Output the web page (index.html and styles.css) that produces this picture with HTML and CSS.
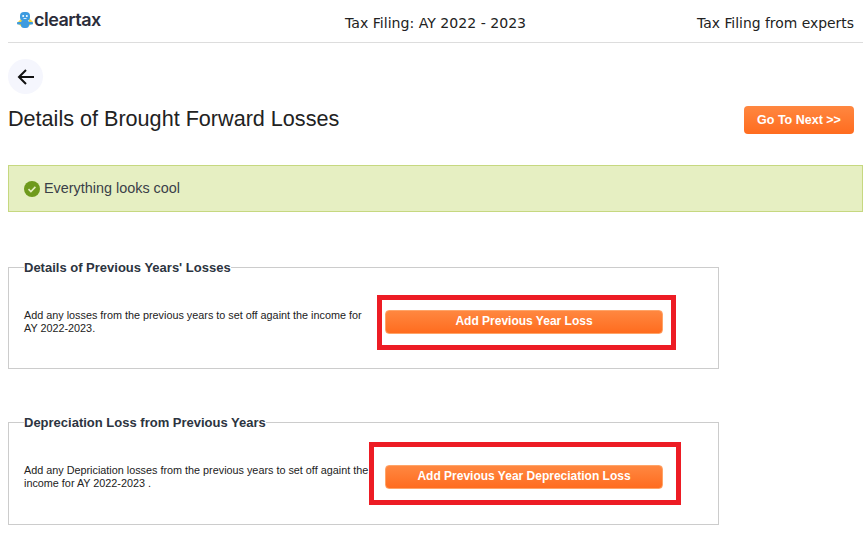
FILE: index.html
```html
<!DOCTYPE html>
<html>
  <head>
    <title>Details of Brought Forward Losses</title>
    <link rel="stylesheet" href="styles.css">
  </head>
  <body>
    <div class="header">
      <div class="logo">
        <svg width="16" height="16" viewBox="0 0 16 16">
          <path d="M0 11l5-5v9z" fill="#f5d63d"></path>
          <path d="M16 10l-4-4v8z" fill="#f5d63d"></path>
          <rect x="3" y="0" width="10" height="9" rx="4" fill="#3d9be0"></rect>
          <rect x="4" y="8" width="8" height="8" rx="3" fill="#3d9be0"></rect>
          <rect x="0" y="10" width="16" height="2.5" rx="1" fill="#3d9be0"></rect>
          <circle cx="6.2" cy="4" r="1" fill="#fff"></circle>
          <circle cx="9.8" cy="4" r="1" fill="#fff"></circle>
          <path d="M6.5 6.5h3" stroke="#fff" stroke-width="0.8"></path>
        </svg>
        <span>cleartax</span>
      </div>
      <span class="nav-title">Tax Filing: AY 2022 - 2023</span>
      <span class="nav-link">Tax Filing from experts</span>
    </div>

    <div class="back">
      <svg width="18" height="18" viewBox="0 0 18 18" fill="none" stroke="#111" stroke-width="2">
        <path d="M17 9H2"></path>
        <path d="M9 2L2 9l7 7"></path>
      </svg>
    </div>

    <div class="title-row">
      <h1>Details of Brought Forward Losses</h1>
      <button class="btn btn-next">Go To Next &gt;&gt;</button>
    </div>

    <div class="alert">
      <svg width="16" height="16" viewBox="0 0 16 16">
        <circle cx="8" cy="8" r="8" fill="#6f9a1c"></circle>
        <path d="M4.5 8.2l2.4 2.3 4.5-4.6" fill="none" stroke="#e6efc2" stroke-width="1.6"></path>
      </svg>
      <span>Everything looks cool</span>
    </div>

    <fieldset class="box box-first">
      <legend>Details of Previous Years' Losses</legend>
      <div class="box-row">
        <p>Add any losses from the previous years to set off againt the income for<br>AY 2022-2023.</p>
        <div class="action">
          <button class="btn btn-wide">Add Previous Year Loss</button>
          <div class="mark mark-first"></div>
        </div>
      </div>
    </fieldset>

    <fieldset class="box box-second">
      <legend>Depreciation Loss from Previous Years</legend>
      <div class="box-row">
        <p>Add any Depriciation losses from the previous years to set off againt the<br>income for AY 2022-2023 .</p>
        <div class="action">
          <button class="btn btn-wide">Add Previous Year Depreciation Loss</button>
          <div class="mark mark-second"></div>
        </div>
      </div>
    </fieldset>
  </body>
</html>
```

FILE: styles.css
```css
body {
  font-family: "Liberation Sans", Arial, sans-serif;
  margin: 0 0 0 8px;
  color: #222;
  overflow: hidden;
}

.header {
  display: grid;
  grid-template-columns: 337px 1fr auto;
  align-items: center;
  height: 42px;
  border-bottom: 1px solid #ddd;
  padding-right: 9px;
  font-family: "DejaVu Sans", Verdana, sans-serif;
  font-size: 14.1px;
  color: #222;
}

.nav-title,
.nav-link {
  margin-top: 4px;
}

.nav-link {
  font-size: 13.9px;
}

.logo {
  display: flex;
  align-items: center;
  gap: 1px;
  padding-left: 9px;
  margin-top: -3px;
  font-family: Inter, sans-serif;
  font-weight: 600;
  font-size: 18px;
  letter-spacing: -0.5px;
  color: #2b2d3a;
}

.back {
  display: flex;
  align-items: center;
  justify-content: center;
  width: 35px;
  height: 35px;
  margin-top: 16px;
  border-radius: 50%;
  background-color: #f5f6fd;
}

.title-row {
  display: flex;
  justify-content: space-between;
  align-items: flex-start;
  margin-top: 11px;
  padding-right: 9px;
}

h1 {
  margin: 0;
  font-size: 21.6px;
  font-weight: 400;
  line-height: 28px;
}

.btn {
  border: 1px solid #ffa468;
  border-radius: 4px;
  background: linear-gradient(#ff8740, #ff6c1f);
  color: white;
  font-family: "Liberation Sans", Arial, sans-serif;
  font-weight: 700;
  font-size: 12px;
  padding: 0 0 2px;
}

.btn-next {
  width: 110px;
  height: 28px;
  margin-top: 1px;
  padding: 0;
  font-size: 12.5px;
  border: none;
}

.alert {
  display: flex;
  align-items: center;
  gap: 4px;
  height: 45px;
  margin-top: 31px;
  padding-left: 15px;
  background-color: #e6efc2;
  border: 1px solid #c6d880;
  font-size: 14.4px;
  color: #3a4048;
}

.alert span {
  margin-bottom: 1px;
}

.box {
  width: 711px;
  margin: 0;
  padding: 0 15px;
  box-sizing: border-box;
  border: 1px solid #ccc;
}

.box-first {
  height: 109px;
  margin-top: 48px;
}

.box-second {
  height: 110px;
  margin-top: 46px;
}

legend {
  padding: 0;
  font-size: 13px;
  font-weight: 700;
  color: #2c3440;
  line-height: 15px;
}

.box-row {
  display: flex;
  align-items: center;
  height: 94px;
}

.box-row p {
  width: 345px;
  margin: 0;
  flex-shrink: 0;
  white-space: nowrap;
  font-size: 10.82px;
  line-height: 13px;
  color: #222;
}

.action {
  position: relative;
  margin-left: 16px;
}

.btn-wide {
  display: block;
  width: 278px;
  height: 24px;
}

.mark {
  position: absolute;
  border: 5px solid #ed1c24;
  box-sizing: border-box;
}

.mark-first {
  left: -8px;
  top: -15px;
  width: 299px;
  height: 55px;
}

.mark-second {
  left: -16px;
  top: -23px;
  width: 312px;
  height: 63px;
}
```
